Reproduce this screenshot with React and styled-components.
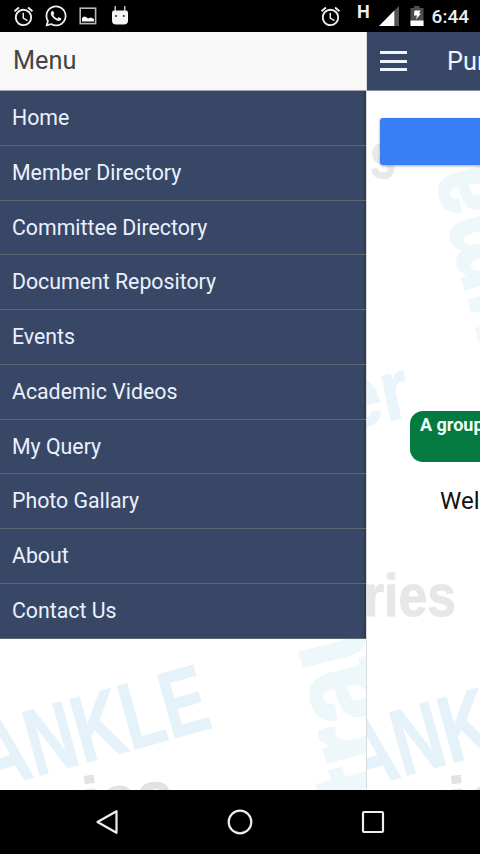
import React from 'react';
import styled, { createGlobalStyle } from 'styled-components';
import { MdAlarm } from 'react-icons/md';
import { FaWhatsapp } from 'react-icons/fa';

const menuItems = [
    'Home',
    'Member Directory',
    'Committee Directory',
    'Document Repository',
    'Events',
    'Academic Videos',
    'My Query',
    'Photo Gallary',
    'About',
    'Contact Us',
];

const PictureIcon = () => (
    <svg width="18" height="18" viewBox="0 0 18 18">
        <rect x="1.2" y="1.2" width="15.4" height="15.4" fill="none" stroke="#b8b8b8" strokeWidth="1.6" />
        <path d="M3 14.5v-3.5l2-1.5 2 .6 2 1.4 3-1 3 1.5v2.5z" fill="#fff" />
    </svg>
);

const DroidIcon = () => (
    <svg width="18" height="20" viewBox="0 0 18 20">
        <path d="M4.2 0v5M13.8 0v5" stroke="#ddd" strokeWidth="1.3" />
        <path d="M1 6.500q0-2 2-2h12q2 0 2 2v8q0 4-4 4h-8q-4 0-4-4z" fill="#f4f4f4" />
        <circle cx="5" cy="10" r="1.1" fill="#333" />
        <circle cx="12.8" cy="10" r="1.1" fill="#333" />
    </svg>
);

const SignalIcon = () => (
    <svg width="20" height="20" viewBox="0 0 20 20">
        <path d="M20 0V20H15V5z" fill="#555" />
        <path d="M15.3 4.5V20H0z" fill="#fff" />
    </svg>
);

const BatteryIcon = () => (
    <svg width="14" height="20" viewBox="0 0 14 20">
        <path d="M4 0h5.5v2H13.5v18H0.5V2H4z" fill="#4d4d4d" />
        <path d="M0.5 14.5h13V20h-13z" fill="#fff" />
        <path d="M4.5 4.5h6l-1.5 3h2l-5 6 1-4h-3z" fill="#fff" />
    </svg>
);

// The same watermark sits behind the drawer and behind the page.
const Watermark = () => (
    <WatermarkSvg width="367" height="700" viewBox="0 90 367 700">
        <WatermarkWord x="3" y="178" $size={64} $color="#e9e9e9" textLength="26" lengthAdjust="spacingAndGlyphs">s</WatermarkWord>
        <WatermarkWord transform="translate(-20 430) rotate(-12)" $size={86} $color="#e9f4fb" textLength="68" lengthAdjust="spacingAndGlyphs">er</WatermarkWord>
        <WatermarkWord x="-3" y="616" $size={60} $color="#e6e7e8" textLength="92" lengthAdjust="spacingAndGlyphs">ries</WatermarkWord>
        <WatermarkWord transform="translate(-12 790) rotate(-15.5)" $size={95} $color="#e6f2fa" textLength="235" lengthAdjust="spacingAndGlyphs">ANKLE</WatermarkWord>
        <WatermarkWord transform="translate(60 830) rotate(-6)" $size={70} $color="#e0e2e3" textLength="116" lengthAdjust="spacingAndGlyphs">ries</WatermarkWord>
        <WatermarkWord transform="translate(402 787) rotate(-104)" $size={125} $color="#eef8fb" $stroke={3} textLength="350" lengthAdjust="spacingAndGlyphs">trauma</WatermarkWord>
        <WatermarkWord transform="translate(165 332) rotate(-105)" $size={100} $color="#eef8fb" $stroke={3} textLength="178" lengthAdjust="spacingAndGlyphs">uma</WatermarkWord>
    </WatermarkSvg>
);

const App = () => {
    return (
        <>
            <GlobalStyle />
            <Screen>
                <StatusBar>
                    <LeftStatus>
                        <MdAlarm size={23} />
                        <FaWhatsapp size={24} />
                        <PictureIcon />
                        <DroidIcon />
                    </LeftStatus>
                    <RightStatus>
                        <MdAlarm size={23} />
                        <Network>H</Network>
                        <SignalIcon />
                        <BatteryIcon />
                        <Clock>6:44</Clock>
                    </RightStatus>
                </StatusBar>
                <Body>
                    <Drawer>
                        <Watermark />
                        <DrawerHeader>Menu</DrawerHeader>
                        <MenuList>
                            {menuItems.map((item) => (
                                <MenuItem key={item}>{item}</MenuItem>
                            ))}
                        </MenuList>
                    </Drawer>
                    <Page>
                        <Watermark />
                        <PageHeader>
                            <MenuToggle aria-label="menu">
                                <span />
                                <span />
                                <span />
                            </MenuToggle>
                            <PageTitle>Pun</PageTitle>
                        </PageHeader>
                        <PageContent>
                            <BlueButton aria-label="open" />
                            <GroupBadge>A group</GroupBadge>
                            <WelcomeText>Welcome</WelcomeText>
                        </PageContent>
                    </Page>
                </Body>
                <NavBar>
                    <svg width="24" height="28" viewBox="0 0 24 28">
                        <path d="M2.5 14L21.5 3.2V24.8z" fill="none" stroke="#eee" strokeWidth="2.2" strokeLinejoin="round" />
                    </svg>
                    <svg width="28" height="28" viewBox="0 0 28 28">
                        <circle cx="14" cy="14" r="11.3" fill="none" stroke="#eee" strokeWidth="2.2" />
                    </svg>
                    <svg width="24" height="28" viewBox="0 0 24 28">
                        <rect x="2" y="4" width="20" height="20" rx="1" fill="none" stroke="#eee" strokeWidth="2.2" />
                    </svg>
                </NavBar>
            </Screen>
        </>
    );
};

const GlobalStyle = createGlobalStyle`
    *{
        box-sizing: border-box;
    }
    body{
        margin: 0;
        font-family: Roboto, "Liberation Sans", sans-serif;
        overflow: hidden;
    }
`

const Screen = styled.div`
    width: 480px;
    height: 854px;
    display: flex;
    flex-direction: column;
    overflow: hidden;
    background-color: #fff;
`

const StatusBar = styled.div`
    height: 32px;
    flex-shrink: 0;
    background-color: #000;
    color: #eee;
    display: flex;
    align-items: center;
    justify-content: space-between;
    padding: 0 11px 0 12px;
`

const StatusGroup = styled.div`
    display: flex;
    align-items: center;

    svg{
        flex-shrink: 0;
    }
`

const LeftStatus = styled(StatusGroup)`
    gap: 9px;

    svg:nth-child(3){
        margin: 0 5px 0 2px;
    }
`

const RightStatus = styled(StatusGroup)`
    gap: 11px;
`

const Network = styled.span`
    font-size: 18px;
    line-height: 18px;
    font-weight: 700;
    margin-left: 4px;
    margin-right: -2px;
    padding-bottom: 9px;
`

const Clock = styled.span`
    font-size: 19px;
    font-weight: 500;
    margin-left: -3px;
`

const Body = styled.div`
    flex: 1;
    min-height: 0;
    display: flex;
`

const Drawer = styled.div`
    position: relative;
    width: 367px;
    flex-shrink: 0;
    overflow: hidden;
    border-right: 1px solid #d8dade;
`

const WatermarkSvg = styled.svg`
    position: absolute;
    left: 0;
    bottom: 0;
`

const WatermarkWord = styled.text`
    font-family: "Liberation Sans", sans-serif;
    font-weight: 700;
    font-size: ${(props) => props.$size}px;
    fill: ${(props) => props.$color};
    stroke: ${(props) => props.$color};
    stroke-width: ${(props) => props.$stroke || 1}px;
`

const DrawerHeader = styled.div`
    position: relative;
    height: 59px;
    background-color: #f8f8f8;
    border-bottom: 1px solid #a3a7ad;
    color: #444;
    font-size: 25.3px;
    line-height: 58px;
    padding-left: 13px;
`

const MenuList = styled.div`
    position: relative;
    background-color: #394766;
    box-shadow: inset -2px 0 1px #303a52;
`

const MenuItem = styled.div`
    height: 54.75px;
    border-bottom: 1px solid #5c6873;
    color: #e9f1ff;
    font-size: 21.3px;
    line-height: 54.4px;
    padding-left: 12px;
`

const Page = styled.div`
    position: relative;
    flex: 1;
    min-width: 0;
    overflow: hidden;
`

const PageHeader = styled.div`
    position: relative;
    height: 59px;
    background-color: #394766;
    border-bottom: 1px solid #8490a4;
    display: flex;
    align-items: center;
    padding-left: 13px;
`

const MenuToggle = styled.button`
    width: 27px;
    height: 20px;
    padding: 0;
    border: none;
    background: none;
    flex-shrink: 0;
    display: flex;
    flex-direction: column;
    justify-content: space-between;

    span{
        width: 27px;
        height: 3px;
        background-color: #eef5ff;
    }
`

const PageTitle = styled.div`
    margin-left: 40px;
    color: #eef5ff;
    font-size: 25.3px;
`

const PageContent = styled.div`
    position: relative;
    display: flex;
    flex-direction: column;
    padding: 27px 0 0 13px;
    white-space: nowrap;
`

const BlueButton = styled.button`
    width: 340px;
    height: 47px;
    border: none;
    border-radius: 3px;
    background-color: #387ef5;
    box-shadow: 0 1px 3px rgba(0, 0, 0, 0.35);
`

const GroupBadge = styled.div`
    margin: 246px 0 0 30px;
    width: 280px;
    height: 51px;
    border-radius: 13px;
    background-color: #057a40;
    color: #f2fff8;
    font-size: 18px;
    font-weight: 700;
    line-height: 28px;
    padding-left: 10px;
`

const WelcomeText = styled.div`
    margin: 24px 0 0 60px;
    color: #111;
    font-size: 24px;
    line-height: 30px;
`

const NavBar = styled.div`
    height: 64px;
    flex-shrink: 0;
    background-color: #000;
    display: flex;
    align-items: center;
    justify-content: center;
    gap: 107px;
`

export default App;
